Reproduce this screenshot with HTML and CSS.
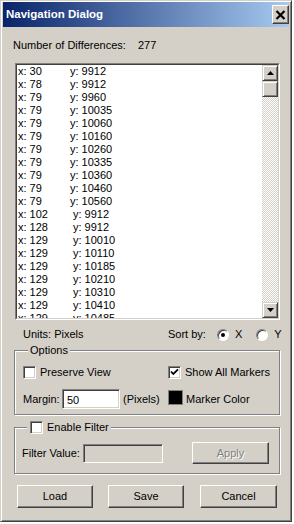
FILE: index.html
```html
<!DOCTYPE html>
<html lang="en">
<head>
  <meta charset="UTF-8" />
  <title>Navigation Dialog</title>
  <link rel="stylesheet" href="styles.css">
</head>
<body>
  <div class="dialog">
    <div class="titlebar">
      <span class="title">Navigation Dialog</span>
      <button type="button" class="close-btn">
        <svg width="11" height="10" viewBox="0 0 11 10"><path d="M1.5 1 L9.5 9 M9.5 1 L1.5 9" stroke="#000" stroke-width="2.2" fill="none"/></svg>
      </button>
    </div>

    <div class="content">
      <div class="count">
        <span class="count-label">Number of Differences:</span>
        <span>277</span>
      </div>

      <div class="listbox">
        <div class="listbox-inner">
          <div class="list-items">
            <div class="row"><span class="cx">x: 30</span><span>y: 9912</span></div>
            <div class="row"><span class="cx">x: 78</span><span>y: 9912</span></div>
            <div class="row"><span class="cx">x: 79</span><span>y: 9960</span></div>
            <div class="row"><span class="cx">x: 79</span><span>y: 10035</span></div>
            <div class="row"><span class="cx">x: 79</span><span>y: 10060</span></div>
            <div class="row"><span class="cx">x: 79</span><span>y: 10160</span></div>
            <div class="row"><span class="cx">x: 79</span><span>y: 10260</span></div>
            <div class="row"><span class="cx">x: 79</span><span>y: 10335</span></div>
            <div class="row"><span class="cx">x: 79</span><span>y: 10360</span></div>
            <div class="row"><span class="cx">x: 79</span><span>y: 10460</span></div>
            <div class="row"><span class="cx">x: 79</span><span>y: 10560</span></div>
            <div class="row"><span class="cx wide">x: 102</span><span>y: 9912</span></div>
            <div class="row"><span class="cx wide">x: 128</span><span>y: 9912</span></div>
            <div class="row"><span class="cx wide">x: 129</span><span>y: 10010</span></div>
            <div class="row"><span class="cx wide">x: 129</span><span>y: 10110</span></div>
            <div class="row"><span class="cx wide">x: 129</span><span>y: 10185</span></div>
            <div class="row"><span class="cx wide">x: 129</span><span>y: 10210</span></div>
            <div class="row"><span class="cx wide">x: 129</span><span>y: 10310</span></div>
            <div class="row"><span class="cx wide">x: 129</span><span>y: 10410</span></div>
            <div class="row"><span class="cx wide">x: 129</span><span>y: 10485</span></div>
          </div>
          <div class="scrollbar">
            <div class="scroll-btn">
              <svg width="7" height="4" viewBox="0 0 7 4"><path d="M3.5 0 L7 4 L0 4 Z" fill="#000"/></svg>
            </div>
            <div class="scroll-btn thumb"></div>
            <div class="track"></div>
            <div class="scroll-btn">
              <svg width="7" height="4" viewBox="0 0 7 4"><path d="M0 0 L7 0 L3.5 4 Z" fill="#000"/></svg>
            </div>
          </div>
        </div>
      </div>

      <div class="units-row">
        <span class="units">Units: Pixels</span>
        <span>Sort by:</span>
        <span class="radio checked"></span><span class="radio-label">X</span>
        <span class="radio radio-y"></span><span class="radio-label">Y</span>
      </div>

      <fieldset class="group options">
        <legend>Options</legend>
        <div class="opt-row">
          <div class="col-left">
            <span class="checkbox"></span>
            <span class="check-label">Preserve View</span>
          </div>
          <span class="checkbox">
            <svg width="9" height="9" viewBox="0 0 9 9"><path d="M1 3.5 L3.3 6 L8 1.3" stroke="#000" stroke-width="1.8" fill="none"/></svg>
          </span>
          <span class="check-label">Show All Markers</span>
        </div>
        <div class="opt-row margin-row">
          <div class="col-left">
            <span class="margin-label">Margin:</span>
            <input class="field margin-input" type="text" value="50">
            <span class="pixels">(Pixels)</span>
          </div>
          <span class="swatch"></span>
          <span class="swatch-label">Marker Color</span>
        </div>
      </fieldset>

      <fieldset class="group filter">
        <legend><span class="checkbox legend-check"></span><span class="check-label">Enable Filter</span></legend>
        <div class="filter-row">
          <span class="filter-label">Filter Value:</span>
          <input class="field filter-input" type="text" disabled>
          <button type="button" class="btn apply" disabled>Apply</button>
        </div>
      </fieldset>

      <div class="actions">
        <button type="button" class="btn">Load</button>
        <button type="button" class="btn">Save</button>
        <button type="button" class="btn cancel">Cancel</button>
      </div>
    </div>
  </div>
</body>
</html>
```

FILE: styles.css
```css
html, body {
  margin: 0;
  background: #fff;
}
body {
  font-family: "Liberation Sans", Arial, sans-serif;
  font-size: 11px;
  line-height: 13px;
  color: #000;
}
.dialog {
  width: 292px;
  height: 522px;
  box-sizing: border-box;
  padding: 1px 2px 2px 2px;
  background: #d4d0c8;
  border: 1px solid;
  border-color: #d4d0c8 #404040 #404040 #d4d0c8;
  box-shadow: inset 1px 1px 0 #fff, inset -1px -1px 0 #808080;
}
.titlebar {
  height: 25px;
  display: flex;
  align-items: center;
  justify-content: space-between;
  padding-left: 3px;
  background: linear-gradient(to right, #0a246a, #a6caf0);
}
.title {
  color: #fff;
  font-weight: bold;
  font-size: 11.5px;
}
.close-btn {
  width: 17px;
  height: 19px;
  padding: 0;
  display: flex;
  align-items: center;
  justify-content: center;
  background: #d4d0c8;
  border: 1px solid;
  border-color: #fff #404040 #404040 #fff;
  box-shadow: inset -1px -1px 0 #808080;
}
.content {
  padding: 12px 9px 0 11px;
}
.count {
  display: flex;
  margin-left: -1px;
}
.count-label {
  width: 125px;
}

/* list box */
.listbox {
  margin: 11px 0 0 1px;
  height: 257px;
  box-sizing: border-box;
  border: 1px solid;
  border-color: #808080 #fff #fff #808080;
}
.listbox-inner {
  height: 100%;
  box-sizing: border-box;
  display: flex;
  border: 1px solid;
  border-color: #404040 #d4d0c8 #d4d0c8 #404040;
  background: #fff;
}
.list-items {
  flex: 1;
  overflow: hidden;
}
.row {
  display: flex;
  padding-left: 1px;
  height: 13px;
  white-space: nowrap;
}
.cx {
  width: 52px;
}
.cx.wide {
  width: 55px;
}
.scrollbar {
  width: 16px;
  display: flex;
  flex-direction: column;
}
.scroll-btn {
  height: 16px;
  flex-shrink: 0;
  box-sizing: border-box;
  display: flex;
  align-items: center;
  justify-content: center;
  background: #d4d0c8;
  border: 1px solid;
  border-color: #d4d0c8 #404040 #404040 #d4d0c8;
  box-shadow: inset 1px 1px 0 #fff, inset -1px -1px 0 #808080;
}
.track {
  flex: 1;
  background: repeating-conic-gradient(#fff 0 25%, #d4d0c8 0 50%) 0 0 / 2px 2px;
}

/* units + sort */
.units-row {
  display: flex;
  align-items: center;
  height: 13px;
  margin-top: 8px;
  padding-left: 9px;
  white-space: nowrap;
}
.units-row > * {
  flex-shrink: 0;
}
.units {
  width: 145px;
}
.radio {
  width: 12px;
  height: 12px;
  box-sizing: border-box;
  border-radius: 50%;
  border: 1px solid;
  border-color: #808080 #fff #fff #808080;
  box-shadow: inset 1px 1px 0 #404040;
  background: #fff;
  margin-left: 11px;
  display: flex;
  align-items: center;
  justify-content: center;
}
.radio.checked::after {
  content: "";
  width: 4px;
  height: 4px;
  border-radius: 50%;
  background: #000;
}
.radio-y {
  margin-left: 14px;
}
.radio-label {
  margin-left: 6px;
}

/* group boxes */
.group {
  margin: 0;
  padding: 0;
  min-width: 0;
  border: 1px solid #808080;
  box-shadow: inset 1px 1px 0 #fff, 1px 1px 0 #fff;
}
.group legend {
  margin-left: 5px;
  padding: 0 2px;
  height: 13px;
  background: #d4d0c8;
  display: flex;
  align-items: center;
}
.options {
  margin-top: 3px;
  padding: 9px 0 5px 8px;
}
.opt-row {
  display: flex;
  align-items: center;
  height: 13px;
  white-space: nowrap;
}
.margin-row {
  margin-top: 10px;
  height: 20px;
}
.col-left {
  width: 145px;
  flex-shrink: 0;
  display: flex;
  align-items: center;
}
.checkbox {
  width: 13px;
  height: 13px;
  flex-shrink: 0;
  box-sizing: border-box;
  border: 1px solid;
  border-color: #808080 #fff #fff #808080;
  box-shadow: inset 1px 1px 0 #404040, inset -1px -1px 0 #d4d0c8;
  background: #fff;
  display: flex;
  align-items: center;
  justify-content: center;
}
.check-label {
  margin-left: 4px;
}
.legend-check {
  margin-left: 1px;
}
.field {
  box-sizing: border-box;
  height: 20px;
  margin: 0;
  padding: 0 0 0 4px;
  font: inherit;
  border: 1px solid;
  border-color: #808080 #fff #fff #808080;
  box-shadow: inset 1px 1px 0 #404040, inset -1px -1px 0 #d4d0c8;
  background: #fff;
  outline: none;
}
.margin-label {
  width: 39px;
}
.margin-input {
  width: 58px;
  padding-top: 1px;
}
.pixels {
  margin-left: 3px;
}
.swatch {
  width: 15px;
  height: 15px;
  flex-shrink: 0;
  box-sizing: border-box;
  background: #000;
  border: 1px solid #808080;
  margin-top: -3px;
}
.swatch-label {
  margin-left: 3px;
}
.filter {
  margin-top: 6px;
  padding: 8px 0 9px 7px;
}
.filter-row {
  display: flex;
  align-items: center;
  height: 22px;
}
.filter-label {
  width: 61px;
}
.filter-input {
  width: 80px;
  height: 19px;
  background: #d4d0c8;
}

/* buttons */
.btn {
  width: 76px;
  height: 23px;
  padding: 0;
  font: inherit;
  color: #000;
  background: #d4d0c8;
  border: 1px solid;
  border-color: #fff #404040 #404040 #fff;
  box-shadow: inset -1px -1px 0 #808080;
}
.apply {
  width: 77px;
  height: 22px;
  margin-left: 29px;
}
.btn:disabled {
  color: #808080;
  text-shadow: 1px 1px 0 #fff;
}
.actions {
  display: flex;
  gap: 15px;
  margin-top: 11px;
  padding-left: 3px;
}
.cancel {
  width: 77px;
  margin-left: 1px;
}
```
